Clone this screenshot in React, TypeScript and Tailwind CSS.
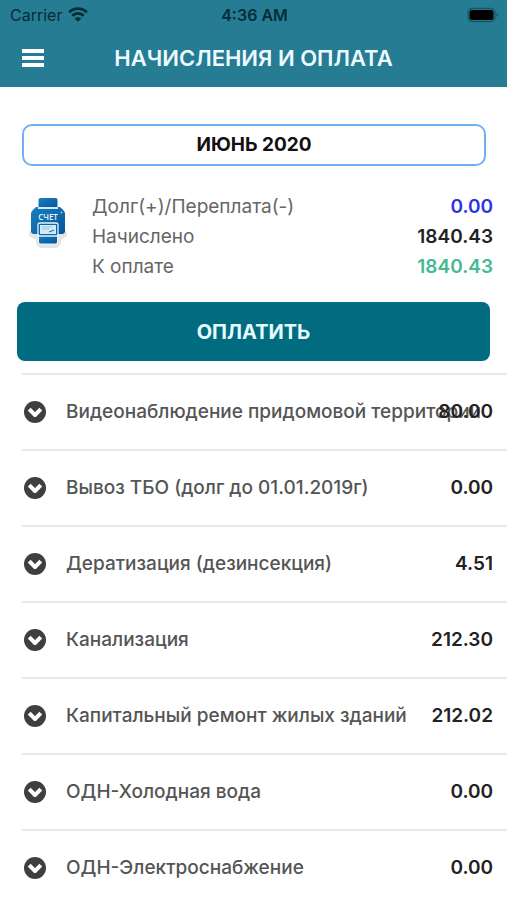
type Charge = {
  name: string;
  amount: string;
};

const charges: Charge[] = [
  { name: "Видеонаблюдение придомовой территории", amount: "80.00" },
  { name: "Вывоз ТБО (долг до 01.01.2019г)", amount: "0.00" },
  { name: "Дератизация (дезинсекция)", amount: "4.51" },
  { name: "Канализация", amount: "212.30" },
  { name: "Капитальный ремонт жилых зданий", amount: "212.02" },
  { name: "ОДН-Холодная вода", amount: "0.00" },
  { name: "ОДН-Электроснабжение", amount: "0.00" },
];

const totals = [
  { label: "Долг(+)/Переплата(-)", value: "0.00", color: "text-[#2a35e0]" },
  { label: "Начислено", value: "1840.43", color: "text-[#222222]" },
  { label: "К оплате", value: "1840.43", color: "text-[#45b993]" },
];

function WifiIcon() {
  return (
    <svg width="20" height="15" viewBox="0 0 20 15" fill="none" aria-hidden="true">
      <path d="M1.2 5.2a12.6 12.6 0 0 1 17.6 0" stroke="currentColor" strokeWidth="2.9" />
      <path d="M4.3 8.7a8.2 8.2 0 0 1 11.4 0" stroke="currentColor" strokeWidth="2.7" />
      <path d="M10 14.8 6.7 11.6a4.7 4.7 0 0 1 6.6 0Z" fill="currentColor" />
    </svg>
  );
}

function BatteryIcon() {
  return (
    <svg width="32" height="16" viewBox="0 0 32 16" fill="none" aria-hidden="true">
      <rect x="1" y="1.5" width="27" height="13" rx="4" stroke="#0d3e49" strokeOpacity="0.6" strokeWidth="1.3" />
      <rect x="2.5" y="3" width="24" height="10" rx="2.5" fill="#000" />
      <path d="M29.5 6c1.6.5 1.6 3.5 0 4Z" fill="#0d3e49" fillOpacity="0.7" />
    </svg>
  );
}

function ChevronCircleIcon() {
  return (
    <svg
      width="22"
      height="22"
      viewBox="0 0 22 22"
      fill="none"
      aria-hidden="true"
      className="ml-0.5 shrink-0"
    >
      <circle cx="11" cy="11" r="11" fill="#3f3f3f" />
      <path d="m5.2 8.2 5.800 5.800 5.800-5.800" stroke="#fff" strokeWidth="4" strokeLinejoin="round" />
    </svg>
  );
}

function BillIcon() {
  return (
    <svg width="40" height="54" viewBox="0 0 40 54" aria-hidden="true">
      <defs>
        <linearGradient id="bill" x1="0" y1="0" x2="1" y2="1">
          <stop offset="0" stopColor="#1a80c0" />
          <stop offset="1" stopColor="#04569a" />
        </linearGradient>
      </defs>
      <path
        d="M3 34h34q2 1 2 3v3l-6 4v4l-4 4H12l-4-4v-4l-7-4v-3q0-2 2-3Z"
        fill="#e3e5e7"
      />
      <path d="M12.500 2h15q2 0 2 2v8h-19V4q0-2 2-2Z" fill="url(#bill)" />
      <path
        d="M8 11h24q4 3 5 6v18q0 3-3 3H6q-3 0-3-3V17q1-3 5-6Z"
        fill="url(#bill)"
      />
      <path d="M10 12h20" stroke="#e9f5fb" strokeWidth="1.8" />
      <circle cx="33.500" cy="16.500" r="1" fill="#8fd3f4" />
      <text
        x="20"
        y="24"
        textAnchor="middle"
        fontFamily="Open Sans, sans-serif"
        fontSize="8"
        fontWeight="600"
        fill="#e9f5fb"
      >
        СЧЕТ
      </text>
      <path d="M10.500 38h19v8q0 2-2 2h-15q-2 0-2-2Z" fill="url(#bill)" stroke="#e9f5fb" />
      <rect x="10" y="27" width="20" height="13" rx="2" fill="#0c67aa" stroke="#e9f5fb" strokeWidth="1.3" />
      <path d="M12 29h16v9H12z" fill="#d3ebf6" />
      <path d="M14 31h10M14 33h7" stroke="#8fc6e2" />
      <path d="m21 36 5-2" stroke="#0c67aa" />
    </svg>
  );
}

function ChargeRow({ charge }: { charge: Charge }) {
  return (
    <li className="ml-[22px] h-[76px] border-t-2 border-[#e8e8e8]">
      <button
        type="button"
        className="flex h-full w-full items-center pr-3.5 text-left text-[19px]"
      >
        <ChevronCircleIcon />
        <span className="ml-5 w-0 flex-1 whitespace-nowrap font-medium text-[#555555]">
          {charge.name}
        </span>
        <span className="z-10 font-semibold text-[#222222]">{charge.amount}</span>
      </button>
    </li>
  );
}

export default function App() {
  return (
    <div className="flex h-screen flex-col overflow-hidden bg-white font-['Inter',sans-serif]">
      <header className="bg-[#257c93]">
        <div className="grid h-[29px] grid-cols-3 items-center pl-2.5 pr-2 text-[16px] text-[#062c36]">
          <div className="flex items-center gap-1.5">
            <span>Carrier</span>
            <WifiIcon />
          </div>
          <span className="text-center font-semibold">4:36 AM</span>
          <div className="flex justify-end">
            <BatteryIcon />
          </div>
        </div>
        <div className="grid h-[58px] grid-cols-[44px_1fr_44px] items-center">
          <button type="button" aria-label="Меню" className="flex flex-col gap-[3px] pl-[22px]">
            <span className="h-1 w-[22px] bg-white" />
            <span className="h-1 w-[22px] bg-white" />
            <span className="h-1 w-[22px] bg-white" />
          </button>
          <h1 className="text-center text-[22px] font-semibold text-[#edfaff]">
            НАЧИСЛЕНИЯ И ОПЛАТА
          </h1>
        </div>
      </header>

      <main className="flex min-h-0 flex-1 flex-col">
        <button
          type="button"
          className="ml-[22px] mr-[21px] mt-[37px] h-[42px] shrink-0 rounded-[10px] border-2 border-[#73b0f2] text-[19px] font-bold text-[#111111]"
        >
          ИЮНЬ 2020
        </button>

        <section className="mt-[26px] flex pl-7 pr-3.5">
          <div className="mt-1 w-16 shrink-0">
            <BillIcon />
          </div>
          <dl className="flex-1 text-[19px] leading-[30px]">
            {totals.map((total) => (
              <div key={total.label} className="flex justify-between">
                <dt className="text-[#666666]">{total.label}</dt>
                <dd className={`font-semibold ${total.color}`}>{total.value}</dd>
              </div>
            ))}
          </dl>
        </section>

        <button
          type="button"
          className="mx-[17px] mt-5 h-[59px] shrink-0 rounded-lg bg-[#016c80] text-[20px] font-bold text-[#e6fbff]"
        >
          ОПЛАТИТЬ
        </button>

        <ul className="mt-3 min-h-0 flex-1 overflow-y-auto [scrollbar-width:none]">
          {charges.map((charge) => (
            <ChargeRow key={charge.name} charge={charge} />
          ))}
        </ul>
      </main>
    </div>
  );
}
